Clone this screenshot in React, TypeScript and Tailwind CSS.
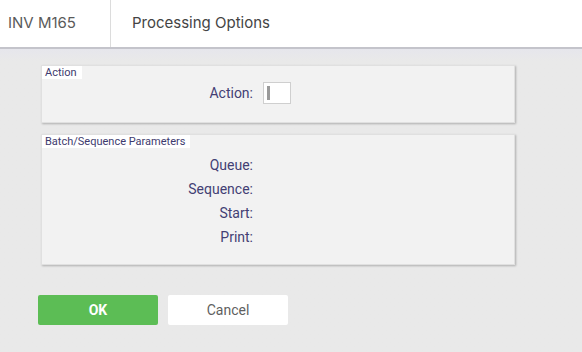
export default function App() {
  const rows = ["Queue:", "Sequence:", "Start:", "Print:"];

  return (
    <div className="w-[582px] h-[352px] flex flex-col bg-[#e9e9e9] font-['Inter',sans-serif] overflow-hidden">
      {/* Header */}
      <div className="h-[49px] shrink-0 flex bg-white border-b-2 border-[#c4c4cb]">
        <div className="w-[111px] flex items-center pl-[8px] border-r border-[#dcdcdc] text-[15px] text-[#5a5a5a]">
          INV M165
        </div>
        <div className="flex items-center pl-[21px] text-[15px] text-[#444]">Processing Options</div>
      </div>

      <div className="flex-1 flex flex-col bg-gradient-to-b from-[#e6e6ec] to-[#e9e9e9] to-[12px] font-['Roboto',sans-serif]">
        {/* Action panel */}
        <div className="ml-[41px] mt-[16px] w-[474px] h-[58px] bg-[#f2f2f2] border border-[#e0e0e0] shadow-[1px_1px_2px_rgba(0,0,0,0.25)]">
          <div className="w-fit bg-white pl-[3px] pr-[5px] text-[11px] leading-[13px] text-[#3d3a6e]">Action</div>
          <div className="flex items-center mt-[3px]">
            <div className="w-[211px] text-right text-[14px] text-[#433f74]">Action:</div>
            <div className="ml-[10px] w-[28px] h-[22px] bg-white border border-[#cfcfcf] flex items-center pl-[3px]">
              <div className="w-[3px] h-[14px] bg-[#9a9a9a]"></div>
            </div>
          </div>
        </div>

        {/* Batch panel */}
        <div className="ml-[41px] mt-[11px] w-[474px] h-[131px] bg-[#f2f2f2] border border-[#e0e0e0] shadow-[1px_1px_2px_rgba(0,0,0,0.25)]">
          <div className="w-fit bg-white pl-[3px] pr-[5px] text-[11px] leading-[13px] text-[#3d3a6e]">
            Batch/Sequence Parameters
          </div>
          <div className="flex flex-col mt-[5px]">
            {rows.map((r) => (
              <div key={r} className="h-[24px] flex items-center">
                <div className="w-[211px] text-right text-[14px] text-[#433f74]">{r}</div>
              </div>
            ))}
          </div>
        </div>

        {/* Buttons */}
        <div className="flex gap-[10px] ml-[38px] mt-[30px]">
          <button className="w-[120px] h-[30px] rounded-[2px] bg-[#5cbd55] text-white font-bold text-[14px]">OK</button>
          <button className="w-[120px] h-[30px] rounded-[2px] bg-white text-[#5f5f5f] text-[14px]">Cancel</button>
        </div>
      </div>
    </div>
  );
}
